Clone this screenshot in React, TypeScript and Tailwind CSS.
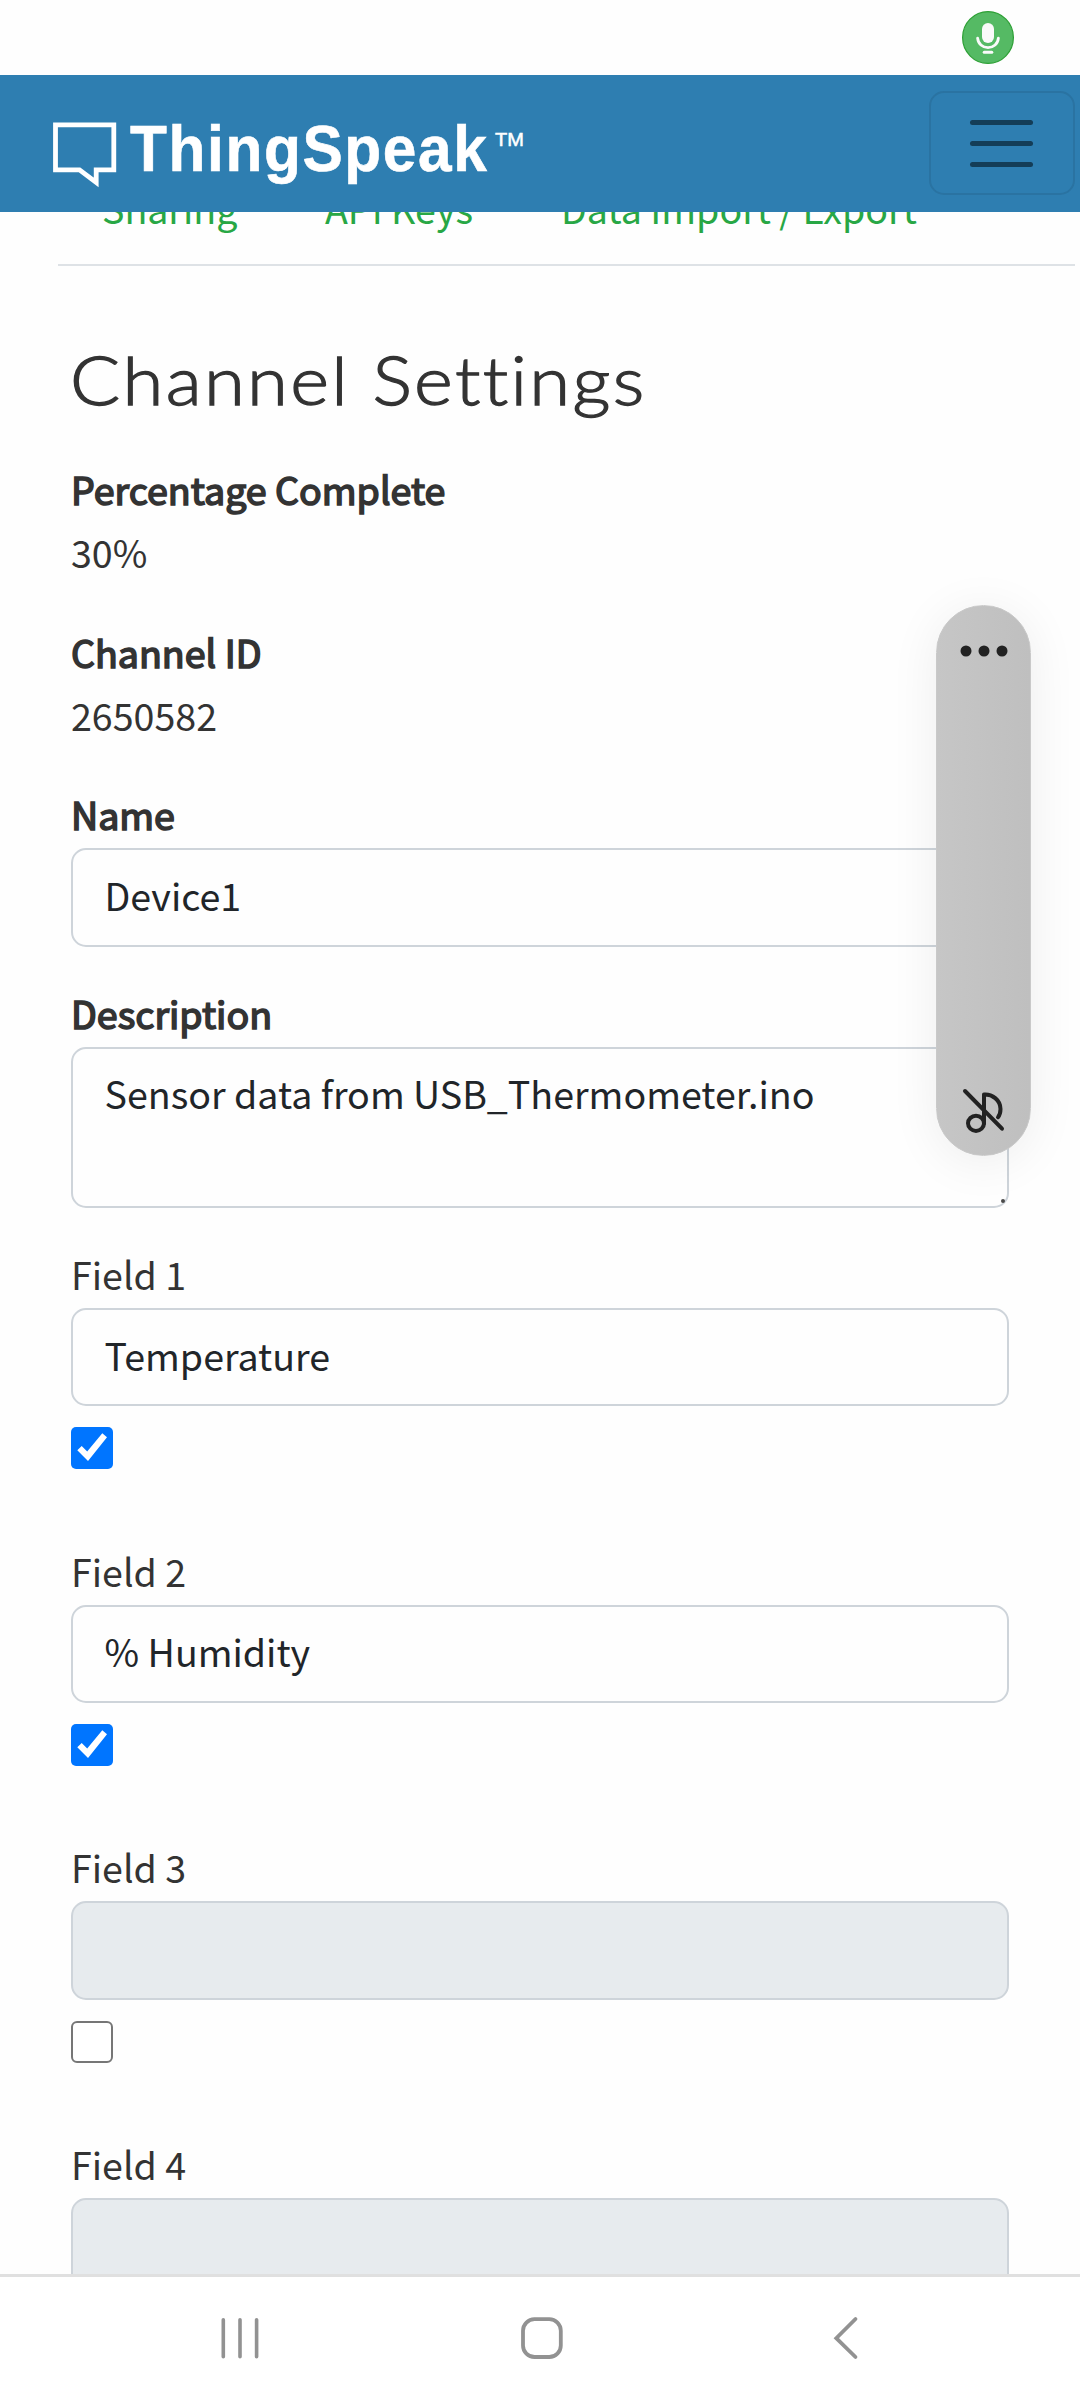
import React from "react";

function Tick() {
  return (
    <svg width="42" height="42" viewBox="0 0 42 42" className="block">
      <rect width="42" height="42" rx="5" fill="#0075ff" />
      <path d="M6.3 23.3 10.7 19 16.2 24.4 31.3 6.3 36 10.2 17 33.9Z" fill="#fff" />
    </svg>
  );
}

function Label({ text, bold }: { text: string; bold?: boolean }) {
  return (
    <div
      className={
        bold
          ? "h-[63px] whitespace-nowrap leading-[63px] [-webkit-text-stroke:1.6px_#333]"
          : "h-[63px] whitespace-nowrap leading-[63px]"
      }
    >
      {text}
    </div>
  );
}

function Field({ name, value, on }: { name: string; value: string; on: boolean }) {
  return (
    <div className="h-[296.5px] shrink-0">
      <Label text={name} />
      <div
        className={
          on
            ? "mt-[3px] h-[98px] rounded-[15px] border-2 border-[#ced4da] bg-[#fefefe] pl-[31.5px] pt-[12.9px] leading-[63px] text-[#212529]"
            : "mt-[3px] h-[99px] rounded-[15px] border-2 border-[#ced4da] bg-[#e7ebee]"
        }
      >
        {value}
      </div>
      <div className="mt-[21px]">
        {on ? <Tick /> : <div className="size-[42px] rounded-[6px] border-[2.5px] border-[#767676] bg-white" />}
      </div>
    </div>
  );
}

export default function App() {
  return (
    <div className="relative flex h-[2400px] w-[1080px] flex-col overflow-hidden bg-[#fefefe] font-['Noto_Sans_CJK_SC',sans-serif] text-[37.6px] text-[#333]">
      <div className="flex h-[75px] shrink-0 justify-end pr-[66px] pt-[11px]">
        <svg width="52" height="53" viewBox="0 0 52 53">
          <ellipse cx="26" cy="26.5" rx="25.4" ry="25.9" fill="#55ba64" stroke="#2da035" strokeWidth="1.2" />
          <rect x="20" y="12" width="12" height="20" rx="6" fill="#fafafa" />
          <path d="M15.6 27.2C16.2 33 20.5 36.6 26 36.6S35.8 33 36.4 27.2" fill="none" stroke="#fafafa" strokeWidth="2.8" strokeLinecap="round" />
          <path d="M22.2 41.2h7.6" stroke="#fafafa" strokeWidth="3" strokeLinecap="round" />
        </svg>
      </div>

      <header className="z-10 flex h-[137px] shrink-0 justify-between bg-[#2e7eb1] pl-[53px] pr-[5px]">
        <div className="flex text-white">
          <svg width="64" height="66" viewBox="0 0 64 66" className="mt-[47px]">
            <path d="M2.5 2.8H60.8V47.8H43.2V60.5L26.5 47.8H2.5Z" fill="none" stroke="#fff" strokeWidth="4.8" />
          </svg>
          <div className="ml-[12.5px] mt-[38px] h-[72px] w-[365.5px] origin-left scale-x-[0.93] whitespace-nowrap font-['Liberation_Sans',sans-serif] text-[65px] font-bold leading-[72px] tracking-[1.7px] [-webkit-text-stroke:0.6px_#fff]">
            ThingSpeak
          </div>
          <div className="mt-[54px] origin-left scale-x-[1.08] font-['Liberation_Sans',sans-serif] text-[18.5px] leading-[22px] [-webkit-text-stroke:0.5px_#fff]">TM</div>
        </div>
        <div className="mt-[16px] flex h-[104px] w-[146px] flex-col items-center gap-[16px] rounded-[15px] border-2 border-[#2a73a2] pr-[2px] pt-[27px]">
          <div className="h-[5px] w-[63px] rounded-full bg-[#143d57]" />
          <div className="h-[5px] w-[63px] rounded-full bg-[#143d57]" />
          <div className="h-[5px] w-[63px] rounded-full bg-[#143d57]" />
        </div>
      </header>

      <nav className="ml-[58px] mr-[5px] flex h-[54px] shrink-0 overflow-hidden border-b-2 border-[#dee2e6] pl-[44px] text-[#28a745]">
        <div className="-mt-[36px] h-[63px] w-[223px] shrink-0 whitespace-nowrap leading-[63px]">Sharing</div>
        <div className="-mt-[36px] h-[63px] w-[236px] shrink-0 whitespace-nowrap leading-[63px]">API Keys</div>
        <div className="-mt-[36px] h-[63px] shrink-0 whitespace-nowrap leading-[63px]">Data Import / Export</div>
      </nav>

      <main className="flex min-h-0 flex-1 flex-col overflow-hidden pl-[71px] pr-[71px]">
        <h1 className="-ml-[1px] mt-[71px] h-[84px] w-[520px] shrink-0 origin-left scale-x-[1.1] whitespace-nowrap font-['Lato',sans-serif] text-[67.5px] font-light leading-[84px] tracking-[2.1px] [-webkit-text-stroke:1.3px_#333]">
          Channel Settings
        </h1>
        <div className="mt-[36px] h-[162.5px] shrink-0">
          <Label text="Percentage Complete" bold />
          <Label text="30%" />
        </div>
        <div className="h-[162.5px] shrink-0">
          <Label text="Channel ID" bold />
          <Label text="2650582" />
        </div>
        <div className="h-[199px] shrink-0">
          <Label text="Name" bold />
          <div className="mt-[3px] h-[99px] rounded-[15px] border-2 border-[#ced4da] pl-[31.5px] pt-[13px] leading-[63px] text-[#212529]">
            Device1
          </div>
        </div>
        <div className="h-[261px] shrink-0">
          <Label text="Description" bold />
          <div className="relative mt-[3px] h-[161px] rounded-[15px] border-2 border-[#ced4da] pl-[31.5px] pt-[12px] leading-[63px] text-[#212529]">
            Sensor data from USB_Thermometer.ino
            <span className="absolute bottom-[3px] right-[2px] size-[4px] rounded-full bg-[#4a4a4a]" />
          </div>
        </div>
        <Field name="Field 1" value="Temperature" on />
        <Field name="Field 2" value="% Humidity" on />
        <Field name="Field 3" value="" on={false} />
        <Field name="Field 4" value="" on={false} />
      </main>

      <footer className="flex h-[126px] shrink-0 border-t-[3px] border-[#e0e0e0] bg-white pl-[219px] pt-[39px]">
        <svg width="42" height="44" viewBox="0 0 42 44" fill="none" stroke="#929292" strokeWidth="3.6" strokeLinecap="round">
          <path d="M4.3 3.8v37M21 3.8v37M37.6 3.8v37" />
        </svg>
        <svg width="42" height="44" viewBox="0 0 42 44" className="ml-[260px]">
          <rect x="2" y="3.2" width="37.8" height="37.8" rx="11.5" fill="none" stroke="#929292" strokeWidth="3.8" />
        </svg>
        <svg width="30" height="44" viewBox="0 0 30 44" className="ml-[267.5px]" fill="none" stroke="#929292" strokeWidth="3.8" strokeLinecap="round">
          <path d="M24.5 3 5.3 22.2 24.5 41" />
        </svg>
      </footer>

      <div className="absolute left-[936px] top-[604.5px] z-20 flex h-[551px] w-[95px] flex-col items-center justify-between rounded-full border border-[#c9c9c9] bg-gradient-to-r from-[#c6c6c6] to-[#bfbfbf] pb-[20px] pt-[39px] shadow-[0_6px_50px_rgba(0,0,0,0.07)]">
        <svg width="48" height="12" viewBox="0 0 48 12" fill="#222">
          <circle cx="6" cy="6" r="5.5" />
          <circle cx="24" cy="6" r="5.5" />
          <circle cx="42" cy="6" r="5.5" />
        </svg>
        <svg width="44" height="48" viewBox="962 1087 44 48" fill="none" stroke="#222" strokeWidth="4" strokeLinecap="round" strokeLinejoin="round">
          <path d="M965 1091 1002 1128.7" />
          <path d="M984 1123.5V1094.5C992 1093.8 1000.5 1100 1000.5 1109C1000.5 1112 999.8 1115 998 1117.2" />
          <ellipse cx="976" cy="1123.3" rx="8" ry="7.6" />
        </svg>
      </div>
    </div>
  );
}
